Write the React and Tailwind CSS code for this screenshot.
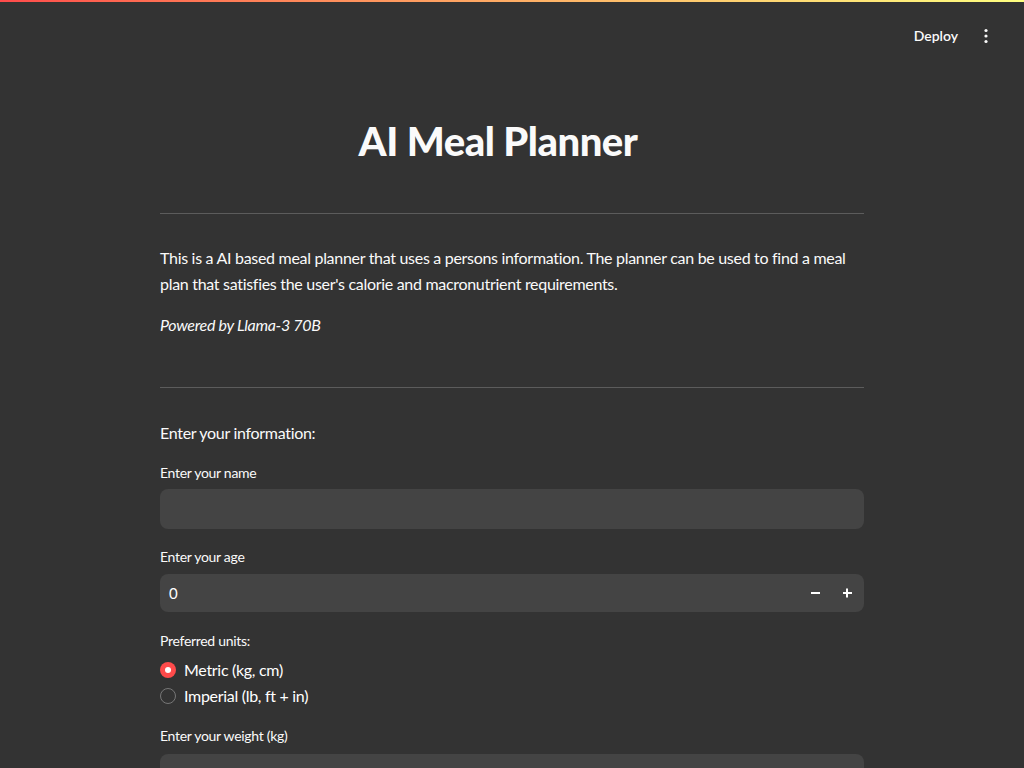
import React from "react";

export default function App() {
  const font = { fontFamily: '"Source Sans Pro", Lato, "Open Sans", sans-serif' };
  return (
    <div className="w-[1024px] h-[768px] overflow-hidden bg-[#333333] text-white" style={font}>
      <div className="h-[2px] bg-gradient-to-r from-[#ff4b4b] to-[#ffff80]" />
      <div className="h-[58px] flex items-center justify-end pr-[36px]">
        <span className="text-[14px] font-semibold text-[#fafafa] mr-[26px] mt-[9px]">Deploy</span>
        <svg width="4" height="16" viewBox="0 0 4 16" className="mt-[9px]">
          <circle cx="2" cy="2.5" r="1.6" fill="#fafafa" />
          <circle cx="2" cy="8" r="1.6" fill="#fafafa" />
          <circle cx="2" cy="13.5" r="1.6" fill="#fafafa" />
        </svg>
      </div>
      <div className="w-[704px] mx-auto tracking-[-0.3px]">
        <h1 className="text-[40px] font-black text-center pr-[28px] mt-[58px] leading-[46px] tracking-[-0.5px] text-[#fafafa]">AI Meal Planner</h1>
        <hr className="border-0 h-px bg-[#5c5c5c] mt-[49px]" />
        <p className="text-[16px] leading-[26px] mt-[31px] text-[#fafafa]">
          This is a AI based meal planner that uses a persons information. The planner can be used to find a meal plan that satisfies the user's calorie and macronutrient requirements.
        </p>
        <p className="text-[16px] leading-[26px] mt-[15px] italic text-[#fafafa]">Powered by Llama-3 70B</p>
        <hr className="border-0 h-px bg-[#5c5c5c] mt-[49px]" />
        <p className="text-[16px] leading-[26px] mt-[32px] text-[#fafafa]">Enter your information:</p>
        <label className="block text-[14px] leading-[20px] mt-[17px] text-[#fafafa]">Enter your name</label>
        <div className="h-[40px] mt-[6px] rounded-[8px] bg-[#444444]" />
        <label className="block text-[14px] leading-[20px] mt-[18px] text-[#fafafa]">Enter your age</label>
        <div className="h-[38px] mt-[7px] rounded-[8px] bg-[#444444] flex items-center pl-[9px] pr-[1px]">
          <span className="text-[15px] flex-1">0</span>
          <span className="w-[32px] flex justify-center">
            <span className="block w-[9px] h-[2px] bg-white" />
          </span>
          <span className="w-[32px] flex justify-center relative">
            <span className="block w-[9px] h-[2px] bg-white" />
            <span className="absolute left-1/2 top-1/2 -translate-x-1/2 -translate-y-1/2 w-[2px] h-[9px] bg-white" />
          </span>
        </div>
        <label className="block text-[14px] leading-[20px] mt-[19px] text-[#fafafa]">Preferred units:</label>
        <div className="mt-[9px] flex flex-col gap-[6px]">
          <div className="flex items-center h-[20px]">
            <span className="w-[16px] h-[16px] rounded-full bg-[#ff4b4b] flex items-center justify-center">
              <span className="w-[6px] h-[6px] rounded-full bg-white" />
            </span>
            <span className="ml-[8px] text-[16px]">Metric (kg, cm)</span>
          </div>
          <div className="flex items-center h-[20px]">
            <span className="w-[16px] h-[16px] rounded-full border border-[#777777]" />
            <span className="ml-[8px] text-[16px]">Imperial (lb, ft + in)</span>
          </div>
        </div>
        <label className="block text-[14px] leading-[20px] mt-[20px] text-[#fafafa]">Enter your weight (kg)</label>
        <div className="h-[38px] mt-[8px] rounded-[8px] bg-[#444444] flex items-center pl-[9px]">
          <span className="text-[15px]">0.00</span>
        </div>
      </div>
    </div>
  );
}
